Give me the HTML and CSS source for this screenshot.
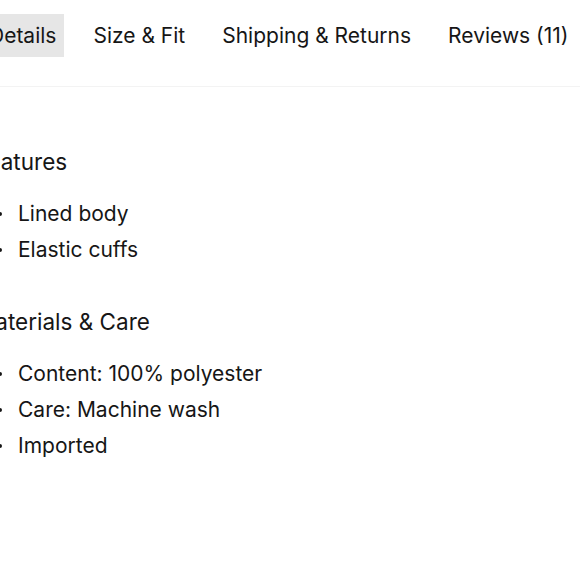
FILE: index.html
```html
<!DOCTYPE html>
<html lang="en">
<head>
<meta charset="utf-8">
<link rel="stylesheet" href="styles.css">
</head>
<body>
<div class="page">
  <nav class="tabs">
    <span class="tab active">Details</span>
    <span class="tab">Size &amp; Fit</span>
    <span class="tab">Shipping &amp; Returns</span>
    <span class="tab">Reviews (11)</span>
  </nav>
  <div class="content">
    <section class="section">
      <h3 class="heading">Features</h3>
      <ul class="list">
        <li>Lined body</li>
        <li>Elastic cuffs</li>
      </ul>
    </section>
    <section class="section">
      <h3 class="heading">Materials &amp; Care</h3>
      <ul class="list">
        <li>Content: 100% polyester</li>
        <li>Care: Machine wash</li>
        <li>Imported</li>
      </ul>
    </section>
  </div>
</div>
</body>
</html>
```
FILE: styles.css
```css
html, body {
  margin: 0;
  padding: 0;
  background: #ffffff;
}
body {
  font-family: Inter, "Noto Sans", sans-serif;
  color: #161616;
  font-size: 21px;
  overflow: hidden;
}
.page {
  width: 640px;
  margin-left: -24px;
}
.tabs {
  display: flex;
  gap: 21px;
  padding-top: 14px;
  padding-bottom: 29px;
  padding-left: 5px;
  border-bottom: 1px solid #f3f3f3;
}
.tab {
  padding: 8px;
  line-height: 27px;
  white-space: nowrap;
}
.tab.active {
  background: #e6e6e6;
}
.content {
  padding-top: 57px;
  display: flex;
  flex-direction: column;
  gap: 36px;
}
.heading {
  margin: 0 0 16px -1px;
  font-size: 22.5px;
  font-weight: 400;
  line-height: 36px;
}
.list {
  margin: 0;
  padding-left: 42px;
  list-style: none;
}
.list li {
  line-height: 36px;
}
.list li::before {
  content: "";
  display: inline-block;
  width: 4px;
  height: 4px;
  border-radius: 50%;
  background: #161616;
  margin-left: -20px;
  margin-right: 16px;
  vertical-align: 5px;
}
```
